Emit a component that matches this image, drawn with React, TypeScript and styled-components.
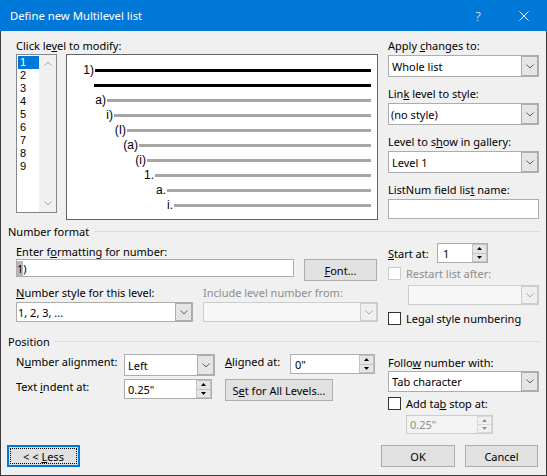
import React from 'react';
import styled, { createGlobalStyle } from 'styled-components';

const GlobalStyle = createGlobalStyle`
  html, body {
    margin: 0;
    padding: 0;
    background: #f0f0f0;
  }
  body {
    font-family: "Noto Sans", "Open Sans", sans-serif;
    font-size: 11px;
    color: #000;
  }
  * {
    box-sizing: border-box;
  }
`;

// window frame
const Window = styled.div`
  width: 547px;
  height: 476px;
  display: flex;
  flex-direction: column;
  background: #f0f0f0;
`;

const TitleBar = styled.div`
  height: 31px;
  flex: none;
  background: #0078d7;
  color: #fff;
  display: flex;
  align-items: center;
`;

const Title = styled.div`
  flex: 1;
  padding-left: 10px;
  font-size: 11.3px;
  white-space: nowrap;
`;

const CaptionButton = styled.div`
  width: 46px;
  height: 31px;
  display: flex;
  align-items: center;
  justify-content: center;
  font-size: 13px;
  font-weight: 300;
`;

const Body = styled.div`
  flex: 1;
  border: 1px solid #3b3b3b;
  border-top: none;
  padding: 7px 7px 0 6px;
  display: flex;
  flex-direction: column;
`;

// generic text bits
const Label = styled.div<{ $disabled?: boolean; $width?: number }>`
  line-height: 15px;
  height: 15px;
  white-space: nowrap;
  color: ${(p) => (p.$disabled ? '#8d8d8d' : '#000')};
  width: ${(p) => (p.$width ? `${p.$width}px` : 'auto')};
  flex: none;
`;

const Key = styled.span`
  text-decoration: underline;
  text-underline-offset: 1px;
`;

// sections
const Section = styled.div<{ $top: number }>`
  display: flex;
  gap: 10px;
  margin-left: 9px;
  margin-top: ${(p) => p.$top}px;
`;

const Column = styled.div<{ $width: number }>`
  width: ${(p) => p.$width}px;
  display: flex;
  flex-direction: column;
  flex: none;
`;

const GroupHeader = styled.div<{ $top: number }>`
  display: flex;
  align-items: center;
  height: 15px;
  margin: ${(p) => p.$top}px -1px 0 1px;
`;

const GroupRule = styled.div`
  flex: 1;
  height: 1px;
  background: #dcdcdc;
  margin-left: 5px;
`;

// level list
const LevelRow = styled.div`
  display: flex;
  gap: 9px;
  align-items: flex-start;
  margin-top: 1px;
`;

const ListBox = styled.div`
  width: 41px;
  height: 159px;
  border: 1px solid #828790;
  background: #fff;
  display: flex;
`;

const ListItems = styled.div`
  width: 22px;
  padding: 1px 0 0 1px;
`;

const ListItem = styled.div<{ $selected?: boolean }>`
  height: 13px;
  line-height: 13px;
  padding-left: 2px;
  font-family: "Liberation Sans", Arial, sans-serif;
  font-size: 11px;
  background: ${(p) => (p.$selected ? '#0078d7' : 'transparent')};
  color: ${(p) => (p.$selected ? '#fff' : '#000')};
`;

const ScrollBar = styled.div`
  width: 17px;
  background: #f0f0f0;
  display: flex;
  flex-direction: column;
  justify-content: space-between;
`;

const ScrollArrow = styled.div`
  height: 17px;
  display: flex;
  align-items: center;
  justify-content: center;
`;

// preview
const Preview = styled.div`
  width: 312px;
  height: 166px;
  border: 1px solid #646464;
  background: #fff;
  padding: 8px 6px 0 0;
  display: flex;
  flex-direction: column;
`;

const PreviewRow = styled.div<{ $start: number }>`
  height: 15px;
  display: grid;
  grid-template-columns: ${(p) => p.$start}px 1fr;
  align-items: center;
`;

const PreviewNumber = styled.div`
  text-align: right;
  padding-right: 1px;
  font-family: "Liberation Sans", Arial, sans-serif;
  font-size: 12px;
  line-height: 15px;
`;

const PreviewBar = styled.div<{ $dark?: boolean }>`
  height: 3px;
  background: ${(p) => (p.$dark ? '#000' : '#a6a6a6')};
`;

// controls
const Field = styled.div<{ $top?: number }>`
  display: flex;
  flex-direction: column;
  gap: 2px;
  margin-top: ${(p) => p.$top ?? 0}px;
`;

const ComboBox = styled.div<{ $width?: number; $height?: number; $disabled?: boolean; $top?: number; $left?: number }>`
  display: flex;
  flex: none;
  width: ${(p) => (p.$width ? `${p.$width}px` : '100%')};
  height: ${(p) => p.$height ?? 22}px;
  margin-top: ${(p) => p.$top ?? 0}px;
  margin-left: ${(p) => p.$left ?? 0}px;
  border: 1px solid ${(p) => (p.$disabled ? '#cccccc' : '#adadad')};
  background: ${(p) => (p.$disabled ? '#f7f7f7' : '#fff')};
`;

const ComboValue = styled.div<{ $pad?: number }>`
  flex: 1;
  display: flex;
  align-items: center;
  padding-left: ${(p) => p.$pad ?? 3}px;
  white-space: nowrap;
  overflow: hidden;
`;

const ComboButton = styled.div<{ $disabled?: boolean }>`
  width: 17px;
  flex: none;
  display: flex;
  align-items: center;
  justify-content: center;
  background: ${(p) => (p.$disabled ? '#efefef' : '#e5e5e5')};
  box-shadow: inset 0 0 0 1px ${(p) => (p.$disabled ? '#cccccc' : '#adadad')};
`;

const TextBox = styled.div<{ $width?: number; $height?: number }>`
  width: ${(p) => (p.$width ? `${p.$width}px` : '100%')};
  height: ${(p) => p.$height ?? 20}px;
  flex: none;
  border: 1px solid #adadad;
  background: #fff;
  display: flex;
  align-items: center;
`;

const Selected = styled.span`
  background: #b8b8b8;
`;

const SpinBox = styled.div<{ $width: number; $height?: number; $disabled?: boolean; $top?: number; $left?: number }>`
  width: ${(p) => p.$width}px;
  height: ${(p) => p.$height ?? 20}px;
  flex: none;
  margin-top: ${(p) => p.$top ?? 0}px;
  margin-left: ${(p) => p.$left ?? 0}px;
  border: 1px solid ${(p) => (p.$disabled ? '#cccccc' : '#adadad')};
  background: ${(p) => (p.$disabled ? '#f3f3f3' : '#fff')};
  color: ${(p) => (p.$disabled ? '#8d8d8d' : '#000')};
  display: flex;
`;

const SpinValue = styled.div<{ $pad?: number }>`
  flex: 1;
  display: flex;
  align-items: center;
  padding-left: ${(p) => p.$pad ?? 4}px;
`;

const SpinButtons = styled.div`
  width: 13px;
  margin: 1px 1px 1px 0;
  display: flex;
  flex-direction: column;
  gap: 1px;
`;

const SpinArrow = styled.div<{ $disabled?: boolean }>`
  flex: 1;
  display: flex;
  align-items: center;
  justify-content: center;
  background: ${(p) => (p.$disabled ? '#f0f0f0' : '#e5e5e5')};
  box-shadow: 0 0 0 1px ${(p) => (p.$disabled ? '#d9d9d9' : '#c2c2c2')};
`;

const Button = styled.div<{ $width: number; $focused?: boolean }>`
  width: ${(p) => p.$width}px;
  height: 22px;
  flex: none;
  display: flex;
  align-items: center;
  justify-content: center;
  background: #e1e1e1;
  border: ${(p) => (p.$focused ? '2px solid #0078d7' : '1px solid #adadad')};
  outline: ${(p) => (p.$focused ? '1px dotted #000' : 'none')};
  outline-offset: -4px;
  white-space: pre;
`;

const CheckRow = styled.div<{ $top: number; $disabled?: boolean }>`
  display: flex;
  align-items: center;
  gap: 5px;
  height: 15px;
  margin-top: ${(p) => p.$top}px;
  color: ${(p) => (p.$disabled ? '#8d8d8d' : '#000')};
  white-space: nowrap;
`;

const CheckBox = styled.div<{ $disabled?: boolean }>`
  width: 13px;
  height: 13px;
  flex: none;
  background: #fff;
  border: 1px solid ${(p) => (p.$disabled ? '#cccccc' : '#333333')};
`;

const Row = styled.div<{ $top?: number; $gap?: number }>`
  display: flex;
  align-items: flex-start;
  gap: ${(p) => p.$gap ?? 10}px;
  margin-top: ${(p) => p.$top ?? 0}px;
`;

const InlineRow = styled.div<{ $top?: number }>`
  display: flex;
  align-items: center;
  margin-top: ${(p) => p.$top ?? 0}px;
`;

const TwoCols = styled.div<{ $top: number }>`
  display: grid;
  grid-template-columns: 177px 175px;
  column-gap: 10px;
  margin-top: ${(p) => p.$top}px;
`;

const PositionGrid = styled.div`
  display: grid;
  grid-template-columns: 108px 101px 65px 85px;
  grid-template-rows: 22px 22px;
  row-gap: 3px;
  margin-top: 5px;
  align-items: start;
`;

const Span2 = styled.div`
  grid-column: span 2;
`;

const Footer = styled.div`
  margin-top: auto;
  padding: 0 1px 8px 0;
  display: flex;
  justify-content: space-between;
`;

const FooterRight = styled.div`
  display: flex;
  gap: 10px;
`;

// small drawings
const Chevron = ({ color = '#606060', up = false }: { color?: string; up?: boolean }) => (
  <svg width="8" height="5" viewBox="0 0 8 5">
    <path d={up ? 'M0.5 4.5 L4 1 L7.5 4.5' : 'M0.5 0.5 L4 4 L7.5 0.5'} stroke={color} strokeWidth="1" fill="none" />
  </svg>
);

const Triangle = ({ up, color = '#000' }: { up?: boolean; color?: string }) => (
  <svg width="5" height="3" viewBox="0 0 5 3">
    <path d={up ? 'M0 3 L2.5 0 L5 3 Z' : 'M0 0 L2.5 3 L5 0 Z'} fill={color} />
  </svg>
);

const Combo = (props: {
  value?: string;
  width?: number;
  height?: number;
  disabled?: boolean;
  top?: number;
  left?: number;
  pad?: number;
}) => (
  <ComboBox $width={props.width} $height={props.height} $disabled={props.disabled} $top={props.top} $left={props.left}>
    <ComboValue $pad={props.pad}>{props.value}</ComboValue>
    <ComboButton $disabled={props.disabled}>
      <Chevron color={props.disabled ? '#a8a8a8' : '#606060'} />
    </ComboButton>
  </ComboBox>
);

const Spin = (props: { value: string; width: number; height?: number; disabled?: boolean; top?: number; left?: number; pad?: number }) => (
  <SpinBox $width={props.width} $height={props.height} $disabled={props.disabled} $top={props.top} $left={props.left}>
    <SpinValue $pad={props.pad}>{props.value}</SpinValue>
    <SpinButtons>
      <SpinArrow $disabled={props.disabled}>
        <Triangle up color={props.disabled ? '#8d8d8d' : '#000'} />
      </SpinArrow>
      <SpinArrow $disabled={props.disabled}>
        <Triangle color={props.disabled ? '#8d8d8d' : '#000'} />
      </SpinArrow>
    </SpinButtons>
  </SpinBox>
);

const previewRows = [
  { label: '1)', start: 28, dark: true },
  { label: '', start: 27, dark: true },
  { label: 'a)', start: 40 },
  { label: 'i)', start: 47 },
  { label: '(I)', start: 60 },
  { label: '(a)', start: 72 },
  { label: '(i)', start: 80 },
  { label: '1.', start: 88 },
  { label: 'a.', start: 100 },
  { label: 'i.', start: 107 },
];

const App: React.FC = () => {
  return (
    <Window>
      <GlobalStyle />
      <TitleBar>
        <Title>Define new Multilevel list</Title>
        <CaptionButton>?</CaptionButton>
        <CaptionButton>
          <svg width="10" height="10" viewBox="0 0 10 10">
            <path d="M0.5 0.5 L9.5 9.5 M9.5 0.5 L0.5 9.5" stroke="#fff" strokeWidth="1" />
          </svg>
        </CaptionButton>
      </TitleBar>

      <Body>
        {/* levels + preview + right side combos */}
        <Section $top={0}>
          <Column $width={362}>
            <Label>
              Click le<Key>v</Key>el to modify:
            </Label>
            <LevelRow>
              <ListBox>
                <ListItems>
                  {['1', '2', '3', '4', '5', '6', '7', '8', '9'].map((n) => (
                    <ListItem key={n} $selected={n === '1'}>
                      {n}
                    </ListItem>
                  ))}
                </ListItems>
                <ScrollBar>
                  <ScrollArrow>
                    <Chevron up color="#a3a3a3" />
                  </ScrollArrow>
                  <ScrollArrow>
                    <Chevron color="#a3a3a3" />
                  </ScrollArrow>
                </ScrollBar>
              </ListBox>
              <Preview>
                {previewRows.map((r, i) => (
                  <PreviewRow key={i} $start={r.start}>
                    <PreviewNumber>{r.label}</PreviewNumber>
                    <PreviewBar $dark={r.dark} />
                  </PreviewRow>
                ))}
              </Preview>
            </LevelRow>
          </Column>
          <Column $width={151}>
            <Field>
              <Label>
                Apply <Key>c</Key>hanges to:
              </Label>
              <Combo value="Whole list" />
            </Field>
            <Field $top={9}>
              <Label>
                Lin<Key>k</Key> level to style:
              </Label>
              <Combo value="(no style)" pad={2} />
            </Field>
            <Field $top={9}>
              <Label>
                Level to s<Key>h</Key>ow in gallery:
              </Label>
              <Combo value="Level 1" />
            </Field>
            <Field $top={9}>
              <Label>
                ListNum field lis<Key>t</Key> name:
              </Label>
              <TextBox $height={20} />
            </Field>
          </Column>
        </Section>

        <GroupHeader $top={4}>
          Number format
          <GroupRule />
        </GroupHeader>
        <Section $top={0}>
          <Column $width={362}>
            <Label style={{ marginTop: 5 }}>
              Enter f<Key>o</Key>rmatting for number:
            </Label>
            <Row>
              <TextBox $width={278} $height={18}>
                <span>
                  <Selected>1</Selected>)
                </span>
              </TextBox>
              <Button $width={73}>
                <span>
                  <Key>F</Key>ont...
                </span>
              </Button>
            </Row>
            <TwoCols $top={4}>
              <Label>
                <Key>N</Key>umber style for this level:
              </Label>
              <Label $disabled>Include level number from:</Label>
            </TwoCols>
            <TwoCols $top={2}>
              <Combo value="1, 2, 3, ..." height={20} pad={1} />
              <Combo height={20} disabled />
            </TwoCols>
          </Column>
          <Column $width={151}>
            <InlineRow $top={4}>
              <Label $width={49}>
                <Key>S</Key>tart at:
              </Label>
              <Spin value="1" width={51} pad={5} />
            </InlineRow>
            <CheckRow $top={3} $disabled>
              <CheckBox $disabled />
              <span>Restart list after:</span>
            </CheckRow>
            <Combo width={131} height={20} left={20} top={4} disabled />
            <CheckRow $top={6}>
              <CheckBox />
              <span>
                Le<Key>g</Key>al style numbering
              </span>
            </CheckRow>
          </Column>
        </Section>

        <GroupHeader $top={8}>
          Position
          <GroupRule />
        </GroupHeader>
        <Section $top={0}>
          <Column $width={362}>
            <PositionGrid>
              <Label>
                N<Key>u</Key>mber alignment:
              </Label>
              <Combo value="Left" width={91} pad={3} />
              <Label>
                <Key>A</Key>ligned at:
              </Label>
              <Spin value={'0"'} width={85} />
              <Label>
                Text <Key>i</Key>ndent at:
              </Label>
              <Spin value={'0.25"'} width={88} pad={3} />
              <Span2>
                <Button $width={108}>
                  <span>
                    S<Key>e</Key>t for All Levels...
                  </span>
                </Button>
              </Span2>
            </PositionGrid>
          </Column>
          <Column $width={151}>
            <Field $top={6}>
              <Label>
                Follo<Key>w</Key> number with:
              </Label>
            </Field>
            <Combo value="Tab character" height={21} top={1} />
            <CheckRow $top={4}>
              <CheckBox />
              <span>
                Add ta<Key>b</Key> stop at:
              </span>
            </CheckRow>
            <Spin value={'0.25"'} width={87} height={19} left={18} top={4} disabled pad={3} />
          </Column>
        </Section>

        <Footer>
          <Button $width={73} $focused>
            <span>
              {'< < '}
              <Key>L</Key>ess
            </span>
          </Button>
          <FooterRight>
            <Button $width={74}>
              <span>OK</span>
            </Button>
            <Button $width={73}>
              <span>Cancel</span>
            </Button>
          </FooterRight>
        </Footer>
      </Body>
    </Window>
  );
};

export default App;
